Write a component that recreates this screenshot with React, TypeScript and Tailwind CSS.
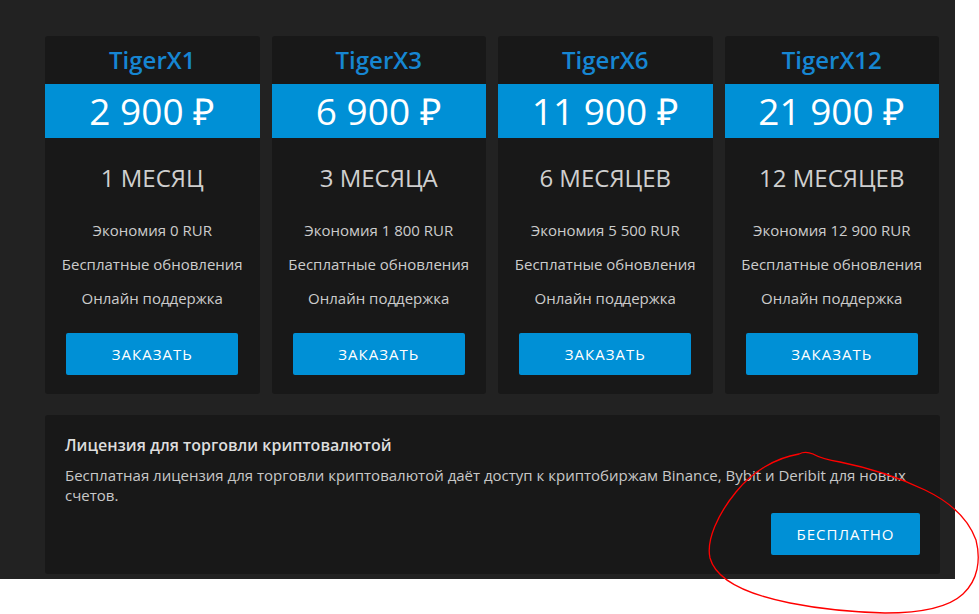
const plans = [
  { name: 'TigerX1', price: '2 900 ₽', period: '1 МЕСЯЦ', saving: 'Экономия 0 RUR' },
  { name: 'TigerX3', price: '6 900 ₽', period: '3 МЕСЯЦА', saving: 'Экономия 1 800 RUR' },
  { name: 'TigerX6', price: '11 900 ₽', period: '6 МЕСЯЦЕВ', saving: 'Экономия 5 500 RUR' },
  { name: 'TigerX12', price: '21 900 ₽', period: '12 МЕСЯЦЕВ', saving: 'Экономия 12 900 RUR' },
];

function PlanCard({ plan }: { plan: (typeof plans)[number] }) {
  return (
    <div className="bg-[#181818] rounded-[3px] flex flex-col items-center pb-[19px]">
      <div className="h-[48px] w-full flex items-center justify-center text-[24px] font-semibold text-[#1686d2]">
        {plan.name}
      </div>
      <div className="h-[54px] w-full bg-[#0090d6] flex items-center justify-center text-[37px] text-white">
        {plan.price}
      </div>
      <div className="mt-[24px] leading-[32px] text-[24px] text-[#cfcfcf]">{plan.period}</div>
      <div className="mt-[26px] flex flex-col items-center gap-[14px] text-[15px] leading-[20px] text-[#cccccc]">
        <span>{plan.saving}</span>
        <span>Бесплатные обновления</span>
        <span>Онлайн поддержка</span>
      </div>
      <button className="mt-[25px] w-[172px] h-[42px] rounded-[2px] bg-[#0090d6] text-white text-[15px] tracking-[1px]">
        ЗАКАЗАТЬ
      </button>
    </div>
  );
}

export default function App() {
  return (
    <div className="relative w-[979px] h-[614px] bg-white font-['Open_Sans',sans-serif]">
      <div className="w-[955px] h-[579px] bg-[#222222] pt-[36px] pl-[45px]">
        <div className="w-[894px] grid grid-cols-4 gap-[12px]">
          {plans.map((p) => (
            <PlanCard key={p.name} plan={p} />
          ))}
        </div>

        {/* License panel */}
        <div className="mt-[21px] w-[895px] h-[159px] bg-[#181818] rounded-[3px] px-[20px] pt-[19px] flex flex-col">
          <div className="text-[16px] leading-[22px] font-semibold text-[#dddddd]">Лицензия для торговли криптовалютой</div>
          <p className="mt-[9px] text-[15px] leading-[20px] text-[#c8c8c8]">
            Бесплатная лицензия для торговли криптовалютой даёт доступ к криптобиржам Binance, Bybit и Deribit для новых
            счетов.
          </p>
          <div className="mt-auto mb-[19px] flex justify-end">
            <button className="w-[149px] h-[42px] rounded-[2px] bg-[#0090d6] text-white text-[15px] tracking-[1px]">
              БЕСПЛАТНО
            </button>
          </div>
        </div>
      </div>

      {/* hand-drawn red annotation */}
      <svg className="absolute inset-0 pointer-events-none" width="979" height="614" viewBox="0 0 979 614" fill="none">
        <path
          d="M813 454 C808 452 803 452 799 454 C775 458 752 472 736 492 C718 514 706 540 710 558 C716 580 745 594 790 603 C820 609 850 612 885 613 C920 613 948 608 963 594 C978 580 981 560 976 540 C968 518 950 502 925 490 C898 477 870 468 840 462 C828 460 820 458 813 454"
          stroke="#ff0000"
          strokeWidth="1.3"
          strokeLinecap="round"
        />
      </svg>
    </div>
  );
}
